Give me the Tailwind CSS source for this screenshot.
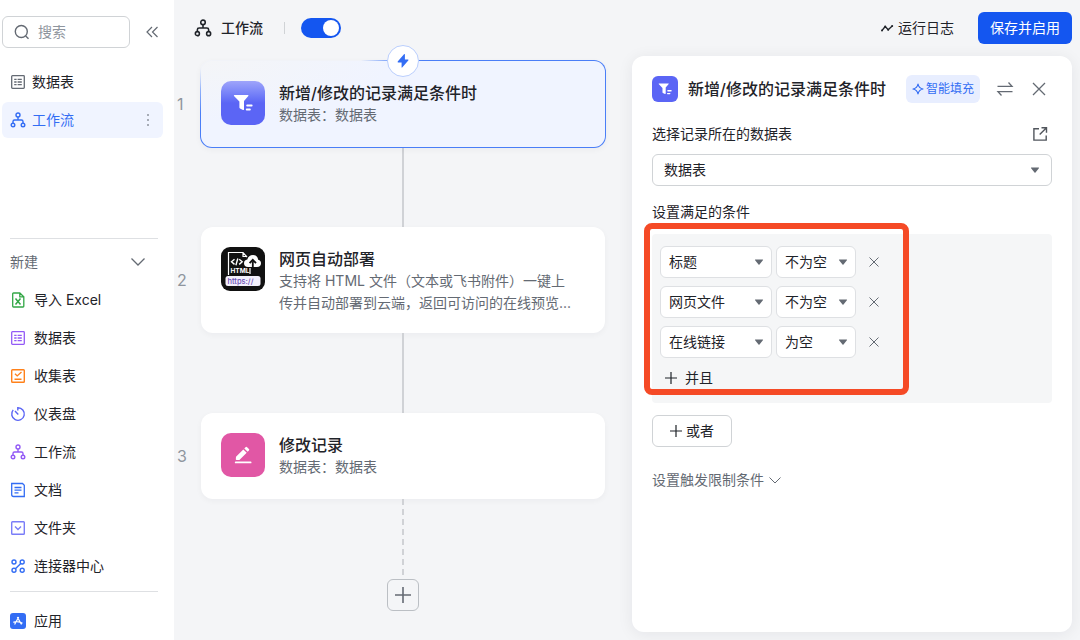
<!DOCTYPE html>
<html lang="zh-CN">
<head>
    <meta charset="UTF-8">
    <meta name="viewport" content="width=device-width, initial-scale=1.0">
    <title>工作流</title>
    <script src="https://cdn.jsdelivr.net/npm/@tailwindcss/browser@4"></script>
</head>
<body class="bg-[#f4f5f7] text-[#1f2329] text-sm font-['Inter','Noto_Sans_CJK_SC',sans-serif]">
    <!-- 公用图标 -->
    <svg class="hidden">
        <symbol id="i-flow" viewBox="0 0 16 16" fill="none" stroke="currentColor" stroke-width="1.4">
            <circle cx="8" cy="3" r="2"/><circle cx="3" cy="13" r="1.8"/><circle cx="13" cy="13" r="1.8"/>
            <path d="M8 5v3M3 11.200V9.500Q3 8 4.500 8h7Q13 8 13 9.500v1.700"/>
        </symbol>
        <symbol id="i-table" viewBox="0 0 16 16" fill="none" stroke="currentColor" stroke-width="1.3">
            <rect x="1.700" y="1.700" width="12.600" height="12.600" rx="0.800"/>
            <path d="M4.200 5.300h2.400M7.600 5.300h4.200M4.200 8h2.400M7.600 8h4.200M4.200 10.700h2.400M7.600 10.700h4.200"/>
        </symbol>
        <symbol id="i-caret" viewBox="0 0 10 10" fill="#646a73"><path d="M1.400 2.500h7.200q.8 0 .3.700L5.500 7.500q-.5.500-1 0L1.100 3.200q-.5-.7.300-.7z"/></symbol>
        <symbol id="i-close" viewBox="0 0 12 12" fill="none" stroke="currentColor"><path d="M1.500 1.500l9 9M10.500 1.500l-9 9"/></symbol>
        <symbol id="i-plus" viewBox="0 0 12 12" fill="none" stroke="currentColor" stroke-width="1.200"><path d="M6 0v12M0 6h12"/></symbol>
        <symbol id="i-filter" viewBox="0 0 20 20" fill="#fff">
            <path d="M1.600 2h13.200q1.200 0 .5 1L11 8v8.200q0 1.100-1 .8L7 15.600q-.6-.3-.6-1V8.500L1 3q-.6-1 .6-1z"/>
            <rect x="13.200" y="11.600" width="6.400" height="1.800" rx=".9"/><rect x="12.800" y="15.600" width="5" height="1.800" rx=".9"/>
        </symbol>
    </svg>

    <div class="flex h-screen overflow-hidden">
        <!-- 侧边栏 -->
        <aside class="flex flex-col w-[174px] shrink-0 bg-white">
            <div class="flex items-center justify-between pt-4 pl-0.5 pr-[15px]">
                <label class="flex items-center gap-2 w-32 h-8 px-[11px] border border-[#d0d3d6] rounded-md">
                    <svg class="w-4 h-4 shrink-0 text-[#646a73]" viewBox="0 0 16 16" fill="none" stroke="currentColor" stroke-width="1.400"><circle cx="7.300" cy="7.500" r="6"/><path d="M11.700 12l2.800 2.800"/></svg>
                    <input type="text" placeholder="搜索" aria-label="搜索" class="w-full min-w-0 outline-none placeholder:text-[#8f959e]">
                </label>
                <button aria-label="收起" class="text-[#646a73]">
                    <svg class="w-3.5 h-3.5" viewBox="0 0 14 14" fill="none" stroke="currentColor" stroke-width="1.200"><path d="M7 2L2 7l5 5M12.500 2l-5 5 5 5"/></svg>
                </button>
            </div>

            <nav class="flex flex-col gap-0.5 mt-4 pl-0.5 pr-[11px]">
                <a href="#" class="flex items-center gap-1.5 h-9 px-2 rounded-md">
                    <svg class="w-4 h-4 text-[#646a73]"><use href="#i-table"/></svg>数据表
                </a>
                <a href="#" class="flex items-center gap-1.5 h-9 px-2 rounded-md bg-[#f0f4ff] text-[#336df4]">
                    <svg class="w-4 h-4"><use href="#i-flow"/></svg>工作流
                    <svg class="w-3.5 h-3.5 ml-auto text-[#8f959e]" viewBox="0 0 14 14" fill="currentColor"><circle cx="7" cy="2" r="1"/><circle cx="7" cy="7" r="1"/><circle cx="7" cy="12" r="1"/></svg>
                </a>
            </nav>

            <div class="mt-auto pl-2.5 pr-4">
                <button class="flex items-center justify-between w-full h-[43px] pt-1 pr-3 border-t border-[#dee0e3] text-[#646a73]">
                    新建
                    <svg class="w-4 h-4" viewBox="0 0 16 16" fill="none" stroke="currentColor" stroke-width="1.300"><path d="M1.500 4.500L8 11l6.500-6.500"/></svg>
                </button>
                <a href="#" class="flex items-center gap-2 h-[38px]">
                    <svg class="w-4 h-4 text-[#32a645]" viewBox="0 0 16 16" fill="none" stroke="currentColor" stroke-width="1.300"><path d="M3.500 1h6.300l4 3.800v9.400q0 .8-.8.800H3.500q-.8 0-.8-.8V1.800q0-.8.8-.8zM9.800 1v3.800h4"/><path d="M5.500 6.500l5 6M10.500 6.500l-5 6" stroke-width="1.500"/></svg>导入 Excel
                </a>
                <a href="#" class="flex items-center gap-2 h-[38px]">
                    <svg class="w-4 h-4 text-[#935af6]"><use href="#i-table"/></svg>数据表
                </a>
                <a href="#" class="flex items-center gap-2 h-[38px]">
                    <svg class="w-4 h-4 text-[#ff811a]" viewBox="0 0 16 16" fill="none" stroke="currentColor" stroke-width="1.400"><rect x="1.700" y="1.700" width="12.600" height="12.600" rx=".8"/><path d="M5 5.700l2.200 2.200L11.500 4M4.500 11.300h7"/></svg>收集表
                </a>
                <a href="#" class="flex items-center gap-2 h-[38px]">
                    <svg class="w-4 h-4 text-[#5b65f5]" viewBox="0 0 16 16" fill="none" stroke="currentColor" stroke-width="1.400"><path d="M7.800 4.500V1.700A6.300 6.300 0 1 1 3.200 3.900M5 5l3.300 3.500"/></svg>仪表盘
                </a>
                <a href="#" class="flex items-center gap-2 h-[38px]">
                    <svg class="w-4 h-4 text-[#935af6]"><use href="#i-flow"/></svg>工作流
                </a>
                <a href="#" class="flex items-center gap-2 h-[38px]">
                    <svg class="w-4 h-4 text-[#336df4]" viewBox="0 0 16 16" fill="none" stroke="currentColor" stroke-width="1.300"><path d="M1.700 1.500h10.800l1.800 1.800v11.200H3.500q-1.800 0-1.800-1.800zM4.500 5.500h7M4.500 8.200h7M4.500 10.900h4"/></svg>文档
                </a>
                <a href="#" class="flex items-center gap-2 h-[38px]">
                    <svg class="w-4 h-4 text-[#7a7df8]" viewBox="0 0 16 16" fill="none" stroke="currentColor" stroke-width="1.400"><rect x="1.700" y="1.700" width="12.600" height="12.600" rx=".8"/><path d="M5 6.500l3 3 3-3"/></svg>文件夹
                </a>
                <a href="#" class="flex items-center gap-2 h-[38px]">
                    <svg class="w-4 h-4 text-[#336df4]" viewBox="0 0 16 16" fill="none" stroke="currentColor" stroke-width="1.400"><circle cx="4" cy="4" r="2"/><circle cx="12.200" cy="4" r="2"/><circle cx="4" cy="12.200" r="2"/><circle cx="12.200" cy="12.200" r="2"/><path d="M5.400 10.800l5.400-5.400"/></svg>连接器中心
                </a>
                <div class="mt-1.5 pt-2.5 border-t border-[#dee0e3]">
                    <a href="#" class="flex items-center gap-2 h-[38px]">
                        <svg class="w-4 h-4" viewBox="0 0 16 16"><rect width="16" height="16" rx="3" fill="#336df4"/><path d="M7.300 4l4.200 7.500M8.700 4L4.600 11.500M3.200 9.300q5-1.600 9.300 1" fill="none" stroke="#fff" stroke-width="1.200"/></svg>应用
                    </a>
                </div>
            </div>
        </aside>

        <div class="flex flex-col flex-1 min-w-0">
            <!-- 顶部栏 -->
            <header class="flex items-center h-14 shrink-0 pl-5 pr-2">
                <svg class="w-[18px] h-[18px]"><use href="#i-flow"/></svg>
                <h1 class="ml-[9px] font-medium">工作流</h1>
                <span class="w-px h-3 mx-[21px] mr-4 bg-[#d0d3d6]"></span>
                <button role="switch" aria-checked="true" aria-label="启用工作流" class="flex justify-end w-10 h-5 p-0.5 rounded-full bg-[#1456f0]">
                    <span class="w-4 h-4 rounded-full bg-white"></span>
                </button>
                <button class="flex items-center gap-1 ml-auto mr-6">
                    <svg class="w-3.5 h-3.5" viewBox="0 0 14 14" fill="none" stroke="currentColor" stroke-width="1.300" stroke-linejoin="round"><path d="M2 9.500L5.200 5.500l3 3.300 4-3.800"/><g fill="currentColor" stroke="none"><circle cx="2" cy="9.500" r="1"/><circle cx="5.200" cy="5.500" r="1"/><circle cx="8.200" cy="8.800" r="1"/><circle cx="12.200" cy="5" r="1"/></g></svg>
                    运行日志
                </button>
                <button class="h-8 px-3 rounded-md bg-[#1456f0] text-white">保存并启用</button>
            </header>

            <div class="flex flex-1 min-h-0">
                <!-- 流程画布 -->
                <main class="flex-1 min-w-0 pt-1 pr-[27px]">
                    <div class="grid grid-cols-[27px_minmax(0,1fr)] items-center text-[#8f959e]">
                        <span class="pl-[3px] text-base">1</span>
                        <section class="relative -mx-px p-px rounded-xl bg-[radial-gradient(130px_58px_at_80px_0px,#f1f3f8_62%,#8fb0fa_80%,#4a7ef7_110%)] shadow-[0_2px_6px_rgba(31,35,41,0.04)]">
                            <div class="flex gap-3.5 pt-5 pb-[21px] px-5 rounded-[11px] bg-[radial-gradient(190px_60px_at_0px_0px,#f4f5f7,#f0f4ff)]">
                                <span class="flex items-center justify-center w-11 h-11 shrink-0 rounded-[10px] bg-linear-to-b from-[#9fa4fa] via-[#5b65f5] via-50% to-[#5b65f5]">
                                    <svg class="w-5 h-5"><use href="#i-filter"/></svg>
                                </span>
                                <div class="pt-px leading-[22px]">
                                    <h2 class="text-base leading-[22px] font-medium text-[#1f2329]">新增/修改的记录满足条件时</h2>
                                    <p class="text-[#646a73]">数据表：数据表</p>
                                </div>
                            </div>
                            <span class="absolute left-1/2 -top-[15px] -ml-4 flex items-center justify-center w-8 h-8 rounded-full border border-[#bacefd] bg-white">
                                <svg class="w-4 h-4" viewBox="0 0 16 16" fill="#336df4"><path d="M9.900 1.500v5h3q1 0 .4.900L7.400 14.300q-.8.800-.8-.2V9.500H3.200q-1 0-.5-.9L9 1.300q.9-.8.900.2z"/></svg>
                            </span>
                        </section>

                        <span class="col-start-2 justify-self-center w-0.5 h-[79px] bg-[#d0d2d6]"></span>

                        <span class="pl-[3px] text-base">2</span>
                        <section class="flex gap-3.5 pt-5 pb-[19px] px-5 rounded-xl bg-white shadow-[0_2px_6px_rgba(31,35,41,0.04)]">
                            <svg class="w-11 h-11 shrink-0" viewBox="0 0 44 44" font-family="Inter, sans-serif">
                                <rect width="44" height="44" rx="9" fill="#111"/>
                                <g fill="none" stroke="#fff" stroke-width="1.200">
                                    <path d="M7.500 28V5.500H22l4 4.500M22 5.500V9.500h3.500M29 21v6"/>
                                    <path d="M13.500 12.200l-3 2.600 3 2.600M18.200 12.200l3 2.600-3 2.600M16.800 11.500l-1.900 6.800" stroke-width="1.400"/>
                                </g>
                                <path d="M27 20q-4 0-4-3.700 0-3 3.300-3.700Q27.500 8 32 8q4.300 0 5.200 4.700 2.800.7 2.800 3.600 0 3.700-4 3.700z" fill="#fff"/>
                                <path d="M31.800 22v-7.500M28.600 16.200l3.200-3.400 3.200 3.400" fill="none" stroke="#111" stroke-width="1.800"/>
                                <text x="9.500" y="26.300" font-size="6.500" font-weight="700" fill="#fff">HTML</text>
                                <rect x="4.500" y="29" width="35" height="10" rx="2.500" fill="#f3f0fb"/>
                                <text x="6.500" y="36.500" font-size="7.500" font-weight="500" fill="#6a4fb5">https://</text>
                            </svg>
                            <div class="pt-px leading-[22px] min-w-0">
                                <h2 class="text-base leading-[22px] font-medium text-[#1f2329]">网页自动部署</h2>
                                <p class="max-w-[294px] line-clamp-2 text-[#646a73]">支持将 HTML 文件（文本或飞书附件）一键上传并自动部署到云端，返回可访问的在线预览...</p>
                            </div>
                        </section>

                        <span class="col-start-2 justify-self-center w-0.5 h-20 bg-[#d0d2d6]"></span>

                        <span class="pl-[3px] text-base">3</span>
                        <section class="flex gap-3.5 pt-5 pb-[21px] px-5 rounded-xl bg-white shadow-[0_2px_6px_rgba(31,35,41,0.04)]">
                            <span class="flex items-center justify-center w-11 h-11 shrink-0 rounded-[10px] bg-[#e157a5]">
                                <svg class="w-5 h-5" viewBox="0 0 20 20" fill="#fff"><path d="M3 11.700l7.300-7.300 3.400 3.400L6.400 15H3.600q-.8 0-.8-.8zM11.300 3.400l1.200-1.200q.8-.8 1.600 0l1.800 1.800q.8.800 0 1.600l-1.200 1.200z"/><rect x="1.800" y="16.500" width="16.700" height="1.800" rx=".9"/></svg>
                            </span>
                            <div class="pt-px leading-[22px]">
                                <h2 class="text-base leading-[22px] font-medium text-[#1f2329]">修改记录</h2>
                                <p class="text-[#646a73]">数据表：数据表</p>
                            </div>
                        </section>

                        <span class="col-start-2 justify-self-center w-0.5 h-20 bg-[repeating-linear-gradient(to_bottom,#d0d2d6_0_6px,transparent_6px_10px)]"></span>
                        <button aria-label="添加步骤" class="col-start-2 justify-self-center flex items-center justify-center w-8 h-8 border border-[#bbbfc4] rounded-md text-[#646a73]">
                            <svg class="w-4 h-4"><use href="#i-plus"/></svg>
                        </button>
                    </div>
                </main>

                <!-- 配置面板 -->
                <aside class="w-[440px] shrink-0 mr-2 mb-2 p-5 rounded-xl bg-white shadow-[0_2px_16px_rgba(31,35,41,0.07)]">
                    <div class="flex items-center h-[26px]">
                        <span class="flex items-center justify-center w-[26px] h-[26px] rounded-md bg-[#5b65f5]">
                            <svg class="w-3.5 h-3.5"><use href="#i-filter"/></svg>
                        </span>
                        <h2 class="ml-2.5 text-base font-medium">新增/修改的记录满足条件时</h2>
                        <button class="flex items-center gap-0.5 h-7 ml-auto px-1.5 rounded-md bg-[#e8eeff] text-xs text-[#336df4]">
                            <svg class="w-3 h-3" viewBox="0 0 12 12" fill="none" stroke="currentColor" stroke-width="1.200" stroke-linejoin="round"><path d="M6 1q.8 4.200 5 5-4.200.8-5 5-.8-4.200-5-5 4.200-.8 5-5z"/></svg>
                            智能填充
                        </button>
                        <button aria-label="切换" class="ml-4 text-[#646a73]">
                            <svg class="w-[18px] h-[18px]" viewBox="0 0 18 18" fill="none" stroke="currentColor" stroke-width="1.300"><path d="M1.500 6.300h14.500L12.500 2.500M16.500 11.700H2l3.500 3.800"/></svg>
                        </button>
                        <button aria-label="关闭" class="mr-[5px] ml-[17px] text-[#646a73]">
                            <svg class="w-4 h-4" viewBox="0 0 16 16" fill="none" stroke="currentColor" stroke-width="1.300"><path d="M2 2l12 12M14 2L2 14"/></svg>
                        </button>
                    </div>

                    <div class="flex items-center justify-between h-[22px] mt-[21px] pr-1">
                        <label for="table">选择记录所在的数据表</label>
                        <button aria-label="打开数据表" class="text-[#51565d]">
                            <svg class="w-4 h-4" viewBox="0 0 16 16" fill="none" stroke="currentColor" stroke-width="1.400"><path d="M7 2.700H1.900v11.400h12.300V9.500M9.500 1.700h5v5M14.500 1.700L7.700 8.500"/></svg>
                        </button>
                    </div>
                    <div class="grid items-center mt-[9px]">
                        <select id="table" class="col-start-1 row-start-1 h-8 px-[11px] border border-[#d0d3d6] rounded-md appearance-none bg-white"><option>数据表</option></select>
                        <svg class="col-start-1 row-start-1 justify-self-end w-2.5 h-2.5 mr-3 pointer-events-none"><use href="#i-caret"/></svg>
                    </div>

                    <h3 class="mt-[15px] leading-[22px]">设置满足的条件</h3>
                    <div class="relative mt-[11px] pt-3 pb-[15px] pl-2 rounded bg-[#f5f6f7]">
                        <div class="grid grid-cols-[112px_80px_auto] gap-x-1 gap-y-2 items-center justify-start">
                            <div class="grid items-center">
                                <select aria-label="字段" class="col-start-1 row-start-1 h-8 px-2 border border-[#dee0e3] rounded-md appearance-none bg-white"><option>标题</option></select>
                                <svg class="col-start-1 row-start-1 justify-self-end w-2.5 h-2.5 mr-2 pointer-events-none"><use href="#i-caret"/></svg>
                            </div>
                            <div class="grid items-center">
                                <select aria-label="条件" class="col-start-1 row-start-1 h-8 px-2 border border-[#dee0e3] rounded-md appearance-none bg-white"><option>不为空</option></select>
                                <svg class="col-start-1 row-start-1 justify-self-end w-2.5 h-2.5 mr-2 pointer-events-none"><use href="#i-caret"/></svg>
                            </div>
                            <button aria-label="删除条件" class="ml-2 text-[#646a73]"><svg class="w-3 h-3"><use href="#i-close"/></svg></button>

                            <div class="grid items-center">
                                <select aria-label="字段" class="col-start-1 row-start-1 h-8 px-2 border border-[#dee0e3] rounded-md appearance-none bg-white"><option>网页文件</option></select>
                                <svg class="col-start-1 row-start-1 justify-self-end w-2.5 h-2.5 mr-2 pointer-events-none"><use href="#i-caret"/></svg>
                            </div>
                            <div class="grid items-center">
                                <select aria-label="条件" class="col-start-1 row-start-1 h-8 px-2 border border-[#dee0e3] rounded-md appearance-none bg-white"><option>不为空</option></select>
                                <svg class="col-start-1 row-start-1 justify-self-end w-2.5 h-2.5 mr-2 pointer-events-none"><use href="#i-caret"/></svg>
                            </div>
                            <button aria-label="删除条件" class="ml-2 text-[#646a73]"><svg class="w-3 h-3"><use href="#i-close"/></svg></button>

                            <div class="grid items-center">
                                <select aria-label="字段" class="col-start-1 row-start-1 h-8 px-2 border border-[#dee0e3] rounded-md appearance-none bg-white"><option>在线链接</option></select>
                                <svg class="col-start-1 row-start-1 justify-self-end w-2.5 h-2.5 mr-2 pointer-events-none"><use href="#i-caret"/></svg>
                            </div>
                            <div class="grid items-center">
                                <select aria-label="条件" class="col-start-1 row-start-1 h-8 px-2 border border-[#dee0e3] rounded-md appearance-none bg-white"><option>为空</option></select>
                                <svg class="col-start-1 row-start-1 justify-self-end w-2.5 h-2.5 mr-2 pointer-events-none"><use href="#i-caret"/></svg>
                            </div>
                            <button aria-label="删除条件" class="ml-2 text-[#646a73]"><svg class="w-3 h-3"><use href="#i-close"/></svg></button>
                        </div>
                        <button class="flex items-center gap-2 mt-2.5 ml-[5px] leading-5">
                            <svg class="w-3 h-3"><use href="#i-plus"/></svg>并且
                        </button>
                        <!-- 重点标注框 -->
                        <div class="absolute -top-[11px] -left-2 w-[265px] h-[172px] border-6 border-[#f54a26] rounded-lg pointer-events-none"></div>
                    </div>

                    <button class="flex items-center justify-center gap-1 w-20 h-8 mt-3 border border-[#d0d3d6] rounded-md">
                        <svg class="w-3 h-3"><use href="#i-plus"/></svg>或者
                    </button>
                    <button class="flex items-center gap-1 mt-[22px] leading-[22px] text-[#646a73]">
                        设置触发限制条件
                        <svg class="w-3.5 h-3.5" viewBox="0 0 14 14" fill="none" stroke="currentColor"><path d="M1.500 4.500L7 10l5.500-5.500"/></svg>
                    </button>
                </aside>
            </div>
        </div>
    </div>
</body>
</html>
